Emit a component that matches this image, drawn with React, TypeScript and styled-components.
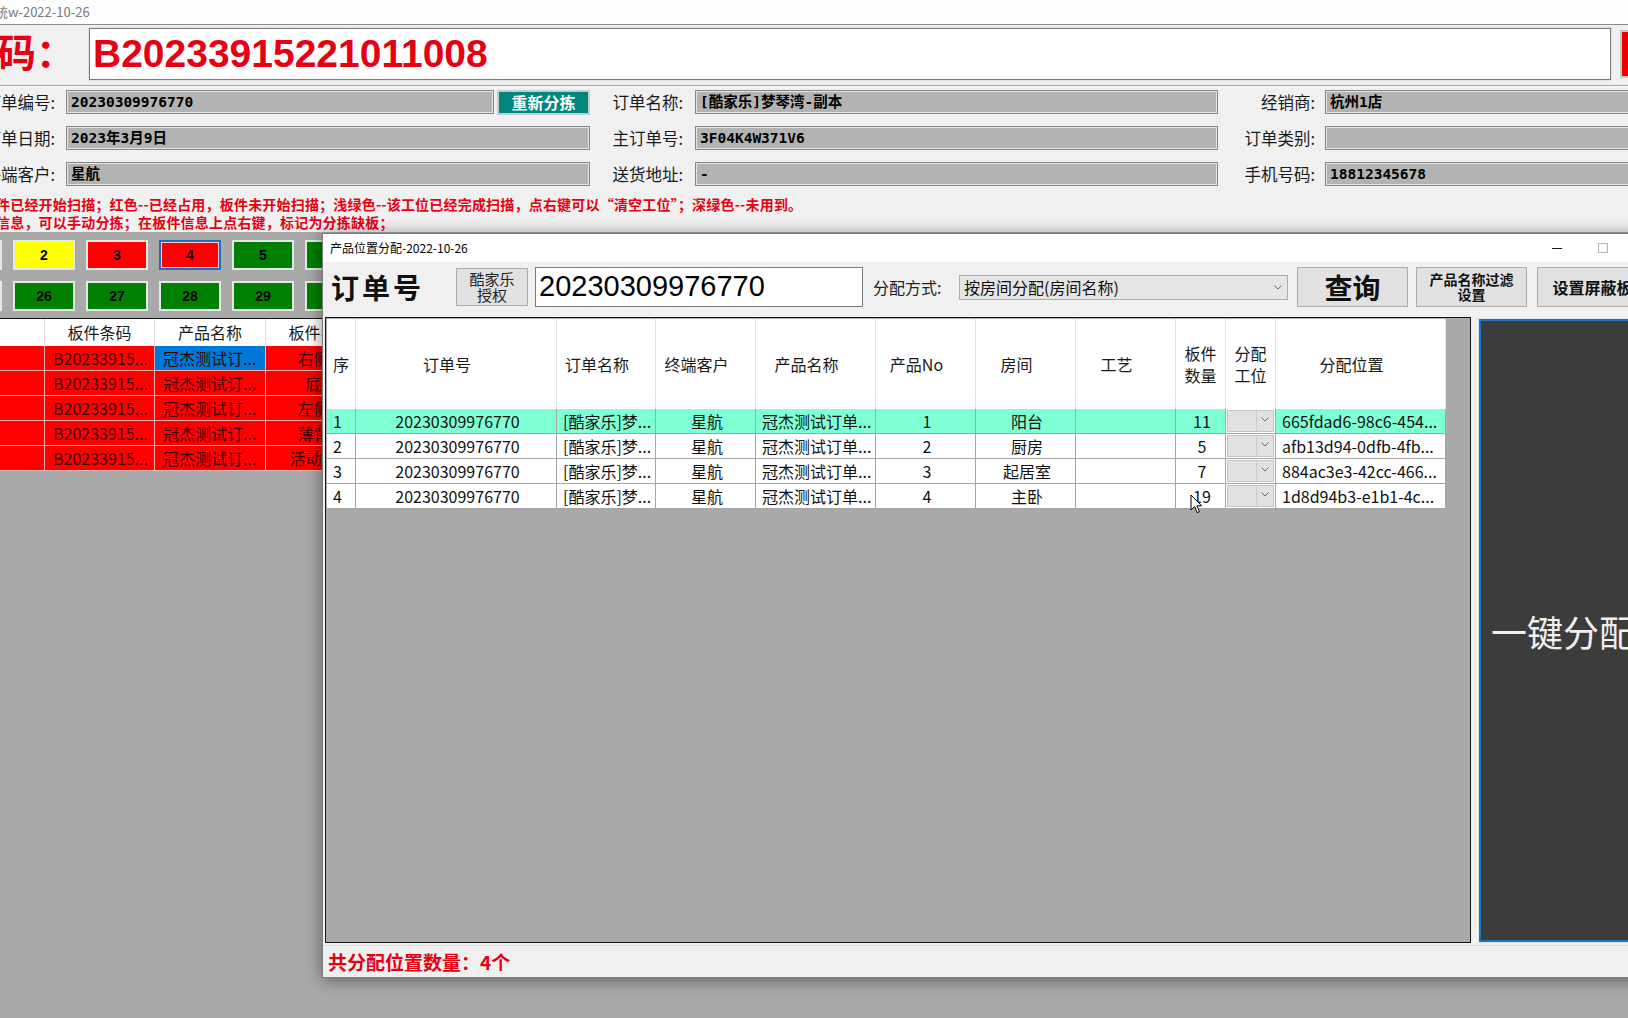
import React from "react";
import styled, { createGlobalStyle, css } from "styled-components";

const cjk = `"Noto Sans CJK SC", "Noto Sans", sans-serif`;
const mono = `"DejaVu Sans Mono", "Noto Sans CJK SC", monospace`;
const RED = "#e60012";

const GlobalStyle = createGlobalStyle`
  html, body {
    margin: 0;
    padding: 0;
    overflow: hidden;
    background: #a9a9a9;
  }
  body {
    font-family: ${cjk};
  }
  * {
    box-sizing: border-box;
  }
`;

type TileTone = "red" | "yellow" | "green";

const tileFill: Record<TileTone, string> = {
  red: "#ff0000",
  yellow: "#ffff00",
  green: "#008000",
};

const stationTop: { no: number; tone: TileTone; active?: boolean }[] = [
  { no: 1, tone: "red" },
  { no: 2, tone: "yellow" },
  { no: 3, tone: "red" },
  { no: 4, tone: "red", active: true },
  { no: 5, tone: "green" },
  { no: 6, tone: "green" },
  { no: 7, tone: "green" },
];

const stationBottom = [25, 26, 27, 28, 29, 30, 31];

const panels = [
  { code: "B20233915...", product: "冠杰测试订...", name: "右侧板" },
  { code: "B20233915...", product: "冠杰测试订...", name: "底板" },
  { code: "B20233915...", product: "冠杰测试订...", name: "左侧板" },
  { code: "B20233915...", product: "冠杰测试订...", name: "薄背板" },
  { code: "B20233915...", product: "冠杰测试订...", name: "活动层板" },
];

type Align = "left" | "center";

// wide columns leave room for the sort glyph, so their titles sit a bit left of centre
const columns: { key: string; title: string; w: number; align: Align; sortPad: boolean }[] = [
  { key: "seq", title: "序", w: 29, align: "left", sortPad: false },
  { key: "order", title: "订单号", w: 201, align: "center", sortPad: true },
  { key: "orderName", title: "订单名称", w: 99, align: "left", sortPad: true },
  { key: "customer", title: "终端客户", w: 100, align: "center", sortPad: true },
  { key: "product", title: "产品名称", w: 120, align: "left", sortPad: true },
  { key: "productNo", title: "产品No", w: 100, align: "center", sortPad: true },
  { key: "room", title: "房间", w: 100, align: "center", sortPad: true },
  { key: "craft", title: "工艺", w: 100, align: "center", sortPad: true },
  { key: "count", title: "板件\n数量", w: 50, align: "center", sortPad: false },
  { key: "station", title: "分配\n工位", w: 50, align: "center", sortPad: false },
  { key: "slot", title: "分配位置", w: 170, align: "left", sortPad: true },
];

const gridTemplate = columns.map((c) => `${c.w}px`).join(" ");

const rows: Record<string, string>[] = [
  { seq: "1", order: "20230309976770", orderName: "[酷家乐]梦...", customer: "星航", product: "冠杰测试订单...", productNo: "1", room: "阳台", craft: "", count: "11", slot: "665fdad6-98c6-454..." },
  { seq: "2", order: "20230309976770", orderName: "[酷家乐]梦...", customer: "星航", product: "冠杰测试订单...", productNo: "2", room: "厨房", craft: "", count: "5", slot: "afb13d94-0dfb-4fb..." },
  { seq: "3", order: "20230309976770", orderName: "[酷家乐]梦...", customer: "星航", product: "冠杰测试订单...", productNo: "3", room: "起居室", craft: "", count: "7", slot: "884ac3e3-42cc-466..." },
  { seq: "4", order: "20230309976770", orderName: "[酷家乐]梦...", customer: "星航", product: "冠杰测试订单...", productNo: "4", room: "主卧", craft: "", count: "19", slot: "1d8d94b3-e1b1-4c..." },
];

function Chevron() {
  return (
    <svg width="8" height="5" viewBox="0 0 8 5">
      <path d="M0.5 0.5 L4 4 L7.5 0.5" fill="none" stroke="#6a6a6a" strokeWidth="1" />
    </svg>
  );
}

export default function App() {
  return (
    <Desktop>
      <GlobalStyle />
      <MainWindow>
        <MainTitle>板件分拣系统w-2022-10-26</MainTitle>
        <Header>
          <BarcodeRow>
            <BarcodeLabel>板件条码：</BarcodeLabel>
            <BarcodeBox>B20233915221011008</BarcodeBox>
            <RedFlag />
          </BarcodeRow>
          <Divider />
          <InfoGrid>
            <Label $pad={11}>订单编号:</Label>
            <FieldWithButton>
              <Field>20230309976770</Field>
              <TealButton>重新分拣</TealButton>
            </FieldWithButton>
            <Label $pad={12}>订单名称:</Label>
            <Field>[酷家乐]梦琴湾-副本</Field>
            <Label $pad={10}>经销商:</Label>
            <Field>杭州1店</Field>

            <Label $pad={11}>订单日期:</Label>
            <Field>2023年3月9日</Field>
            <Label $pad={12}>主订单号:</Label>
            <Field>3F04K4W371V6</Field>
            <Label $pad={10}>订单类别:</Label>
            <Field />

            <Label $pad={11}>终端客户:</Label>
            <Field>星航</Field>
            <Label $pad={12}>送货地址:</Label>
            <Field>-</Field>
            <Label $pad={10}>手机号码:</Label>
            <Field>18812345678</Field>
          </InfoGrid>
          <NoticeBlock>
            <Notice>
              件已经开始扫描；红色--已经占用，板件未开始扫描；浅绿色--该工位已经完成扫描，点右键可以“清空工位”；深绿色--未用到。
            </Notice>
            <Notice>信息，可以手动分拣；在板件信息上点右键，标记为分拣缺板；</Notice>
          </NoticeBlock>
        </Header>
        <Board>
          <StationRow>
            {stationTop.map((s) => (
              <Tile key={s.no} $tone={s.tone} $active={s.active}>
                {s.no}
              </Tile>
            ))}
          </StationRow>
          <StationRow>
            {stationBottom.map((n) => (
              <Tile key={n} $tone="green">
                {n}
              </Tile>
            ))}
          </StationRow>
          <PanelGrid>
            <PanelHead />
            <PanelHead>板件条码</PanelHead>
            <PanelHead>产品名称</PanelHead>
            <PanelHead>板件名称</PanelHead>
            <PanelHead>长度</PanelHead>
            <PanelHead>宽度</PanelHead>
            {panels.map((p, i) => (
              <React.Fragment key={i}>
                <PanelCell />
                <PanelCell $align="left">{p.code}</PanelCell>
                <PanelCell $align="left" $selected={i === 0}>
                  {p.product}
                </PanelCell>
                <PanelCell>{p.name}</PanelCell>
                <PanelCell />
                <PanelCell />
              </React.Fragment>
            ))}
          </PanelGrid>
        </Board>
      </MainWindow>

      <Dialog>
        <DialogTitle>
          <span>产品位置分配-2022-10-26</span>
          <Controls>
            <ControlBox>
              <MinGlyph />
            </ControlBox>
            <ControlBox>
              <MaxGlyph />
            </ControlBox>
            <ControlBox>
              <CloseGlyph>✕</CloseGlyph>
            </ControlBox>
          </Controls>
        </DialogTitle>
        <Toolbar>
          <BigTitle>订单号</BigTitle>
          <AuthButton>
            酷家乐
            <br />
            授权
          </AuthButton>
          <OrderInput>20230309976770</OrderInput>
          <MethodLabel>分配方式:</MethodLabel>
          <Select>
            <span>按房间分配(房间名称)</span>
            <Chevron />
          </Select>
          <ToolButton $w={111} $size={28} $gap={9}>
            查询
          </ToolButton>
          <ToolButton $w={111} $size={14} $gap={8} $lh={15}>
            产品名称过滤
            <br />
            设置
          </ToolButton>
          <ToolButton $w={111} $size={16} $gap={10}>
            设置屏蔽板
          </ToolButton>
        </Toolbar>
        <Content>
          <GridBox>
            <GridRow>
              {columns.map((c) => (
                <HeadCell key={c.key} $sortPad={c.sortPad}>
                  {c.title}
                </HeadCell>
              ))}
            </GridRow>
            {rows.map((r, i) => (
              <GridRow key={i}>
                {columns.map((c) =>
                  c.key === "station" ? (
                    <ComboCell key={c.key}>
                      <Combo>
                        <ComboArrow>
                          <Chevron />
                        </ComboArrow>
                      </Combo>
                    </ComboCell>
                  ) : (
                    <DataCell key={c.key} $align={c.align} $picked={i === 0}>
                      {r[c.key]}
                    </DataCell>
                  )
                )}
              </GridRow>
            ))}
          </GridBox>
          <OneKeyButton>一键分配</OneKeyButton>
        </Content>
        <Footer>共分配位置数量：4个</Footer>
      </Dialog>

      <Cursor width="13" height="21" viewBox="0 0 13 21">
        <path
          d="M1 1 L1 16 L4.6 12.6 L7.2 18.6 L9.4 17.6 L6.9 11.8 L11.6 11.8 Z"
          fill="#fff"
          stroke="#000"
          strokeWidth="1"
          strokeLinejoin="round"
        />
      </Cursor>
    </Desktop>
  );
}

const Desktop = styled.div`
  position: relative;
  width: 1628px;
  height: 1018px;
  overflow: hidden;
  background: #a9a9a9;
`;

const MainWindow = styled.div`
  margin-left: -120px;
  width: 1900px;
  height: 100%;
  display: flex;
  flex-direction: column;
  background: #a9a9a9;
`;

const MainTitle = styled.div`
  height: 25px;
  flex: none;
  background: #fdfdfd;
  border-bottom: 1px solid #8a8a8a;
  padding-left: 50px;
  font: 13px/24px ${cjk};
  color: #7a7a7a;
`;

const Header = styled.div`
  height: 207px;
  flex: none;
  background: #f0f0f0;
  padding-top: 3px;
`;

const BarcodeRow = styled.div`
  display: flex;
  align-items: center;
  height: 52px;
`;

const BarcodeLabel = styled.div`
  width: 209px;
  flex: none;
  padding-right: 38px;
  text-align: right;
  font: bold 39px/52px "Liberation Sans", ${cjk};
  color: ${RED};
  white-space: nowrap;
`;

const BarcodeBox = styled.div`
  width: 1522px;
  height: 52px;
  flex: none;
  background: #fff;
  border: 1px solid #7a7a7a;
  box-shadow: 0 0 0 1px #e2e2e2;
  padding-left: 3px;
  font: bold 39px/50px "Liberation Sans", ${cjk};
  color: ${RED};
`;

const RedFlag = styled.div`
  margin-left: 9px;
  width: 60px;
  height: 48px;
  background: #ee0000;
  border: 2px solid #c9c9c9;
`;

const Divider = styled.div`
  margin-top: 5px;
  height: 2px;
  border-top: 1px solid #a3a3a3;
  border-bottom: 1px solid #ffffff;
`;

const InfoGrid = styled.div`
  margin-top: 3px;
  display: grid;
  grid-template-columns: 186px 524px 105px 523px 107px 520px;
  grid-auto-rows: 24px;
  row-gap: 12px;
  align-items: center;
`;

const Label = styled.div<{ $pad: number }>`
  padding-right: ${(p) => p.$pad}px;
  text-align: right;
  font: 16.5px/24px ${cjk};
  color: #1a1a1a;
  white-space: nowrap;
`;

const Field = styled.div`
  height: 24px;
  background: #b3b3b3;
  border: 1px solid #858585;
  box-shadow: inset 0 0 0 1px #e4e4e4;
  padding-left: 4px;
  font: bold 14.5px/22px ${mono};
  color: #000;
  white-space: nowrap;
  overflow: hidden;
  flex: 1;
`;

const FieldWithButton = styled.div`
  display: flex;
  align-items: center;
  gap: 3px;
`;

const TealButton = styled.div`
  width: 93px;
  height: 25px;
  flex: none;
  background: #00867e;
  border: 2px solid #c3cfcd;
  color: #fff;
  font: bold 16px/21px ${cjk};
  text-align: center;
`;

const NoticeBlock = styled.div`
  margin-top: 9px;
`;

const Notice = styled.div`
  padding-left: 116px;
  font: bold 14px/18px ${cjk};
  letter-spacing: 0.2px;
  color: ${RED};
  white-space: nowrap;
`;

const Board = styled.div`
  flex: 1;
  padding-top: 8px;
  display: flex;
  flex-direction: column;
  gap: 11px;
`;

const StationRow = styled.div`
  display: flex;
  gap: 11px;
  padding-left: 60px;
`;

const Tile = styled.div<{ $tone: TileTone; $active?: boolean }>`
  width: 62px;
  height: 30px;
  flex: none;
  background: ${(p) => tileFill[p.$tone]};
  border: 2px solid ${(p) => (p.$active ? "#1f6fbf" : "#e3e9e3")};
  ${(p) =>
    p.$active &&
    css`
      box-shadow: inset 0 0 0 1px #f6d0d0;
    `}
  display: flex;
  align-items: center;
  justify-content: center;
  font: bold 14px/1 "Liberation Sans", sans-serif;
  color: #000;
`;

const PanelGrid = styled.div`
  margin: -4px 0 0 60px;
  border-top: 1px solid #111;
  display: grid;
  grid-template-columns: 105px 110px 111px 110px 110px 110px;
  width: max-content;
`;

const PanelHead = styled.div`
  height: 27px;
  background: #fff;
  border-right: 1px solid #dedede;
  font: 16px/27px ${cjk};
  text-align: center;
  color: #1a1a1a;
`;

const PanelCell = styled.div<{ $selected?: boolean; $align?: Align }>`
  height: 25px;
  background: ${(p) => (p.$selected ? "#0078d7" : "#ff0000")};
  border-right: 1px solid #f5b4b4;
  border-bottom: 1px solid #f5b4b4;
  padding: 0 6px 0 8px;
  font: 16px/24px ${cjk};
  color: #3a0606;
  text-align: ${(p) => p.$align ?? "center"};
  white-space: nowrap;
  overflow: hidden;
`;

const Dialog = styled.div`
  position: absolute;
  left: 322px;
  top: 233px;
  width: 1351px;
  height: 745px;
  background: #f0f0f0;
  border: 1px solid #7d7d7d;
  box-shadow: 0 2px 16px rgba(0, 0, 0, 0.45);
  display: flex;
  flex-direction: column;
`;

const DialogTitle = styled.div`
  height: 28px;
  flex: none;
  background: #fff;
  display: flex;
  align-items: center;
  justify-content: space-between;
  padding-left: 7px;
  font: 12px/28px ${cjk};
  color: #000;
`;

const Controls = styled.div`
  display: flex;
  height: 100%;
`;

const ControlBox = styled.div`
  width: 46px;
  height: 100%;
  display: flex;
  align-items: center;
  justify-content: center;
`;

const MinGlyph = styled.div`
  width: 10px;
  height: 1px;
  background: #1a1a1a;
`;

const MaxGlyph = styled.div`
  width: 10px;
  height: 10px;
  border: 1px solid #b5b5b5;
`;

const CloseGlyph = styled.span`
  font: 12px/1 "DejaVu Sans", sans-serif;
  color: #1a1a1a;
`;

const Toolbar = styled.div`
  height: 50px;
  flex: none;
  display: flex;
  align-items: center;
  padding-left: 8px;
`;

const BigTitle = styled.div`
  width: 125px;
  flex: none;
  font: bold 28px/1 ${cjk};
  letter-spacing: 3px;
  color: #111;
`;

const AuthButton = styled.div`
  width: 72px;
  height: 38px;
  flex: none;
  background: #e1e1e1;
  border: 1px solid #adadad;
  font: 15px/16px ${cjk};
  color: #222;
  text-align: center;
  padding-top: 2px;
`;

const OrderInput = styled.div`
  margin-left: 7px;
  width: 328px;
  height: 40px;
  flex: none;
  background: #fff;
  border: 1px solid #7a7a7a;
  padding-left: 3px;
  font: 29px/37px "Liberation Sans", sans-serif;
  color: #000;
`;

const MethodLabel = styled.div`
  margin-left: 10px;
  width: 86px;
  flex: none;
  font: 16px/1 ${cjk};
  color: #222;
`;

const Select = styled.div`
  width: 329px;
  height: 25px;
  flex: none;
  background: #e5e5e5;
  border: 1px solid #adadad;
  display: flex;
  align-items: center;
  justify-content: space-between;
  padding: 0 5px 0 4px;
  font: 16px/23px ${cjk};
  color: #111;
`;

const ToolButton = styled.div<{ $w: number; $size: number; $gap: number; $lh?: number }>`
  margin-left: ${(p) => p.$gap}px;
  width: ${(p) => p.$w}px;
  height: 40px;
  flex: none;
  background: #e1e1e1;
  border: 1px solid #adadad;
  display: flex;
  align-items: center;
  justify-content: center;
  text-align: center;
  font: bold ${(p) => p.$size}px / ${(p) => p.$lh ?? p.$size}px ${cjk};
  color: #111;
  white-space: nowrap;
`;

const Content = styled.div`
  margin-top: 5px;
  height: 626px;
  flex: none;
  display: flex;
  align-items: flex-start;
  gap: 8px;
  padding-left: 2px;
`;

const GridBox = styled.div`
  width: 1146px;
  height: 626px;
  flex: none;
  background: #a9a9a9;
  border: 1px solid #151515;
  padding: 1px;
`;

const GridRow = styled.div`
  display: grid;
  grid-template-columns: ${gridTemplate};
  width: max-content;
`;

const HeadCell = styled.div<{ $sortPad: boolean }>`
  height: 90px;
  background: #fff;
  border-right: 1px solid #e4e4e4;
  padding-right: ${(p) => (p.$sortPad ? 18 : 0)}px;
  display: flex;
  align-items: center;
  justify-content: center;
  white-space: pre-line;
  text-align: center;
  font: 16px/22px ${cjk};
  color: #1a1a1a;
`;

const DataCell = styled.div<{ $align: Align; $picked: boolean }>`
  height: 25px;
  background: ${(p) => (p.$picked ? "#7fffd4" : "#fff")};
  border-right: 1px solid #a5a5a5;
  border-bottom: 1px solid #a5a5a5;
  padding: 0 3px 0 6px;
  text-align: ${(p) => p.$align};
  font: 16px/24px ${cjk};
  color: #111;
  white-space: nowrap;
  overflow: hidden;
`;

const ComboCell = styled.div`
  height: 25px;
  background: #fff;
  border-right: 1px solid #a5a5a5;
  border-bottom: 1px solid #a5a5a5;
  padding: 1px;
`;

const Combo = styled.div`
  height: 100%;
  background: #e1e1e1;
  border: 1px solid #c4c4c4;
  display: flex;
  justify-content: flex-end;
`;

const ComboArrow = styled.div`
  width: 17px;
  height: 100%;
  border-left: 1px solid #cdcdcd;
  display: flex;
  align-items: center;
  justify-content: center;
  padding-bottom: 4px;
`;

const OneKeyButton = styled.div`
  margin-top: 2px;
  width: 168px;
  height: 623px;
  flex: none;
  background: #3c3c3c;
  border: 2px solid #2173c2;
  box-shadow: 0 0 0 1px #d8e6f2;
  display: flex;
  align-items: center;
  justify-content: center;
  font: 36px/1 ${cjk};
  color: #f0f0f0;
  white-space: nowrap;
`;

const Footer = styled.div`
  flex: 1;
  margin-top: 2px;
  border-top: 1px solid #d9d9d9;
  display: flex;
  align-items: center;
  padding-left: 5px;
  font: bold 19px/1 ${cjk};
  color: ${RED};
`;

const Cursor = styled.svg`
  position: absolute;
  left: 1190px;
  top: 494px;
`;
